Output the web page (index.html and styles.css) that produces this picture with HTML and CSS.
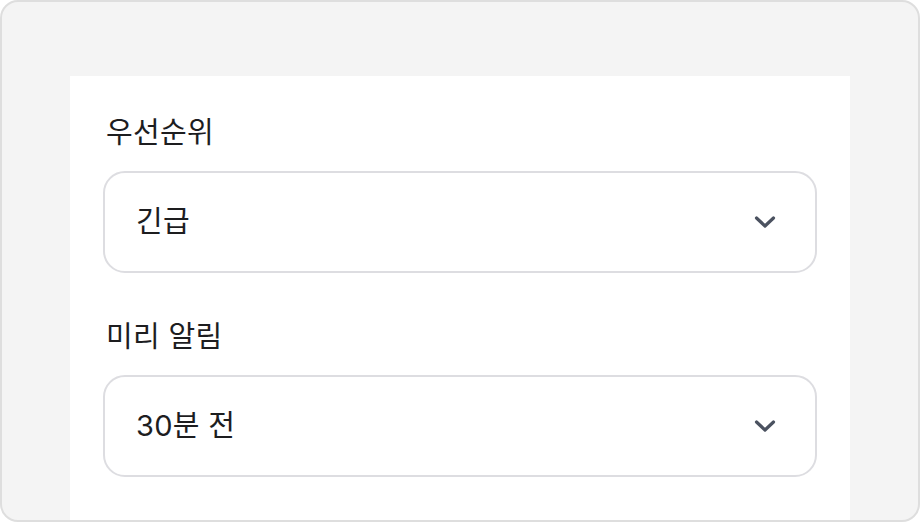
FILE: index.html
```html
<!DOCTYPE html>
<html lang="ko">
<head>
<meta charset="utf-8">
<link rel="stylesheet" href="styles.css">
</head>
<body>
<div class="frame">
  <div class="panel">
    <div class="field">
      <div class="label">우선순위</div>
      <div class="select">
        <span class="value">긴급</span>
        <svg class="chev" width="22" height="14" viewBox="0 0 22 14"><path d="M2.5 3 L11 11 L19.5 3" fill="none" stroke="#4b5260" stroke-width="3.2" stroke-linecap="round" stroke-linejoin="round"/></svg>
      </div>
    </div>
    <div class="field">
      <div class="label">미리 알림</div>
      <div class="select">
        <span class="value">30분 전</span>
        <svg class="chev" width="22" height="14" viewBox="0 0 22 14"><path d="M2.5 3 L11 11 L19.5 3" fill="none" stroke="#4b5260" stroke-width="3.2" stroke-linecap="round" stroke-linejoin="round"/></svg>
      </div>
    </div>
  </div>
</div>
</body>
</html>
```

FILE: styles.css
```css
* { box-sizing: border-box; }
html, body { margin: 0; padding: 0; }
body {
  width: 920px;
  height: 522px;
  font-family: "Inter", "Noto Sans CJK KR", "Noto Sans", sans-serif;
  color: #1d1d1f;
}
.frame {
  width: 920px;
  height: 522px;
  background: #f4f4f4;
  border: 2px solid #dedede;
  border-radius: 18px;
  padding: 74px 68px 0 68px;
  overflow: hidden;
  display: flex;
}
.panel {
  flex: 1;
  background: #ffffff;
  padding: 36px 33px 0 33px;
  display: flex;
  flex-direction: column;
  gap: 43px;
}
.field {
  display: flex;
  flex-direction: column;
  gap: 18px;
}
.label {
  font-size: 29px;
  line-height: 41px;
  font-weight: 400;
  letter-spacing: 0.3px;
  padding-left: 3px;
}
.select {
  height: 102px;
  border: 2px solid #dddde1;
  border-radius: 22px;
  display: flex;
  align-items: center;
  justify-content: space-between;
  padding: 0 39px 0 31px;
}
.value {
  font-size: 29px;
  line-height: 40px;
  letter-spacing: 0.3px;
}
.chev { display: block; }
```
